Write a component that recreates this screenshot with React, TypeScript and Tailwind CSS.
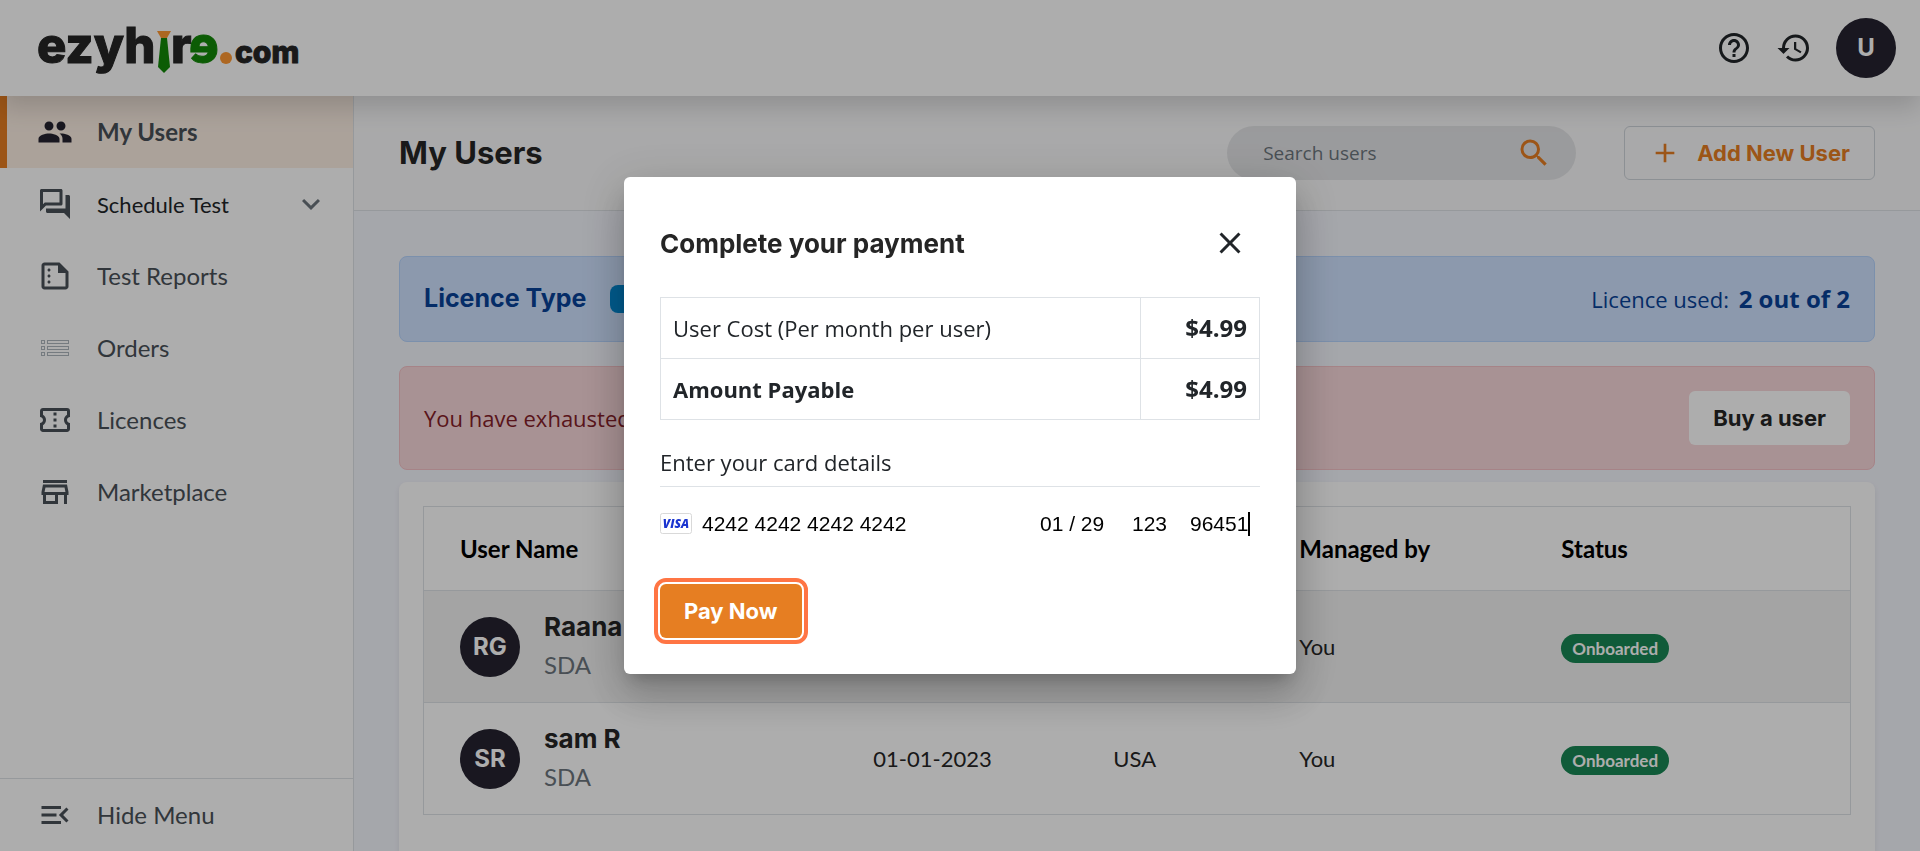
import type { ReactNode } from "react";
import type { IconType } from "react-icons";
import {
  MdAdd,
  MdClose,
  MdExpandMore,
  MdHelpOutline,
  MdHistory,
  MdMenuOpen,
  MdOutlineConfirmationNumber,
  MdOutlineForum,
  MdOutlineStore,
  MdOutlineSummarize,
  MdPeople,
  MdSearch,
} from "react-icons/md";

interface UserRow {
  initials: string;
  name: string;
  org: string;
  date: string;
  country: string;
  managedBy: string;
  status: string;
}

const users: UserRow[] = [
  {
    initials: "RG",
    name: "Raana G",
    org: "SDA",
    date: "01-01-2023",
    country: "USA",
    managedBy: "You",
    status: "Onboarded",
  },
  {
    initials: "SR",
    name: "sam R",
    org: "SDA",
    date: "01-01-2023",
    country: "USA",
    managedBy: "You",
    status: "Onboarded",
  },
];

function Logo() {
  return (
    <svg
      width="270"
      height="72"
      viewBox="0 0 270 72"
      role="img"
      aria-label="ezyhire.com"
      className="font-['Inter',sans-serif]"
    >
      <g fontSize="49" fontWeight="800" fill="#252525" stroke="#252525">
        <text x="1" y="51">ezyh</text>
        <text x="135" y="51">r</text>
      </g>
      <text x="153" y="51" fontSize="51" fontWeight="800" fill="#138808" stroke="#138808">
        ɘ
      </text>
      <path d="M121 19h14l-4 7h-6z" fill="#ff9933" />
      <path d="M125 26h6l3 29-6 6-6-6z" fill="#138808" />
      <circle cx="190" cy="46" r="6" fill="#ff9933" />
      <text x="199" y="51" fontSize="30" fontWeight="800" fill="#252525" stroke="#252525">
        com
      </text>
    </svg>
  );
}

function OrdersIcon() {
  return (
    <svg
      width="36"
      height="36"
      viewBox="0 0 36 36"
      fill="none"
      stroke="#adb5bd"
      aria-hidden="true"
    >
      {[10.5, 16.5, 22.5].map((y) => (
        <g key={y}>
          <rect x="4.5" y={y} width="3" height="3" />
          <rect x="10.5" y={y} width="21" height="3" />
        </g>
      ))}
    </svg>
  );
}

interface NavItemProps {
  icon: ReactNode;
  label: string;
  active?: boolean;
  expandable?: boolean;
}

function NavItem({ icon, label, active = false, expandable = false }: NavItemProps) {
  return (
    <a
      href="#"
      aria-current={active ? "page" : undefined}
      className={[
        "flex h-[72px] items-center gap-6 border-l-[7px] pl-[30px] pr-6",
        active
          ? "border-[#e67e22] bg-[#fcefe4] text-2xl font-bold text-[#495057]"
          : expandable
          ? "border-transparent text-[22px] text-[#212529]"
          : "border-transparent text-2xl text-[#495057]",
      ].join(" ")}
    >
      <span className={active ? "text-[#252330]" : "text-[#495057]"}>{icon}</span>
      <span className="flex-1">{label}</span>
      {expandable && <MdExpandMore size={36} className="text-[#6c757d]" />}
    </a>
  );
}

const navIcon = (Icon: IconType) => <Icon size={36} />;

function Sidebar() {
  return (
    <nav
      aria-label="Main"
      className="flex w-[354px] shrink-0 flex-col border-r border-[#dee2e6] bg-white"
    >
      <div className="flex-1">
        <NavItem icon={navIcon(MdPeople)} label="My Users" active />
        <NavItem icon={navIcon(MdOutlineForum)} label="Schedule Test" expandable />
        <NavItem icon={navIcon(MdOutlineSummarize)} label="Test Reports" />
        <NavItem icon={<OrdersIcon />} label="Orders" />
        <NavItem icon={navIcon(MdOutlineConfirmationNumber)} label="Licences" />
        <NavItem icon={navIcon(MdOutlineStore)} label="Marketplace" />
      </div>
      <div className="border-t border-[#dee2e6]">
        <NavItem icon={navIcon(MdMenuOpen)} label="Hide Menu" />
      </div>
    </nav>
  );
}

function TopBar() {
  return (
    <header className="relative z-10 flex h-24 shrink-0 items-center justify-between bg-white pl-9 pr-6 shadow-[0_12px_24px_rgba(0,0,0,0.15)]">
      <a href="#">
        <Logo />
      </a>
      <div className="flex items-center gap-6 text-[#212529]">
        <button aria-label="Help">
          <MdHelpOutline size={36} />
        </button>
        <button aria-label="History">
          <MdHistory size={36} />
        </button>
        <button
          aria-label="Account"
          className="h-[60px] w-[60px] rounded-full bg-[#252330] font-['Inter',sans-serif] text-2xl font-bold text-white"
        >
          U
        </button>
      </div>
    </header>
  );
}

function PageHeader() {
  return (
    <div className="flex h-[115px] items-center border-b border-[#dee2e6] bg-[#fafafb] px-[45px]">
      <h1 className="flex-1 font-['Inter',sans-serif] text-[31px] font-bold text-[#252525]">
        My Users
      </h1>
      <div className="flex h-[54px] w-[349px] items-center rounded-full bg-[#e4e5e7] pl-9 pr-6">
        <input
          type="search"
          aria-label="Search users"
          placeholder="Search users"
          className="w-full min-w-0 flex-1 bg-transparent font-['Open_Sans',sans-serif] text-[19px] text-[#6c757d] outline-none placeholder:text-[#6c757d]"
        />
        <MdSearch size={36} className="text-[#e67e22]" />
      </div>
      <button className="ml-12 flex h-[54px] items-center gap-4 rounded-md border border-[#ced4da] px-6 font-['Inter',sans-serif] text-[22px] font-bold text-[#e67e22]">
        <MdAdd size={32} />
        Add New User
      </button>
    </div>
  );
}

function UsersTable() {
  return (
    <table className="w-full table-fixed border border-[#dee2e6] text-left text-[22px] text-[#252525]">
      <colgroup>
        <col className="w-[29%]" />
        <col className="w-[240px]" />
        <col className="w-[186px]" />
        <col className="w-[262px]" />
        <col />
      </colgroup>
      <thead className="text-2xl text-black">
        <tr className="h-[84px] border-b border-[#dee2e6]">
          <th className="pl-9 font-bold">User Name</th>
          <th className="pl-9 font-bold">Date</th>
          <th className="pl-9 font-bold">Country</th>
          <th className="pl-9 font-bold">Managed by</th>
          <th className="pl-9 font-bold">Status</th>
        </tr>
      </thead>
      <tbody>
        {users.map((user) => (
          <tr
            key={user.initials}
            className="h-[112px] border-b border-[#dee2e6] odd:bg-[#f2f2f2]"
          >
            <td className="pl-9">
              <div className="flex items-center gap-6">
                <span className="flex h-[60px] w-[60px] items-center justify-center rounded-full bg-[#252330] font-['Inter',sans-serif] text-2xl font-bold text-white">
                  {user.initials}
                </span>
                <div>
                  <div className="font-['Inter',sans-serif] text-[26px] leading-9 font-bold">
                    {user.name}
                  </div>
                  <div className="text-2xl leading-10 text-[#6c757d]">{user.org}</div>
                </div>
              </div>
            </td>
            <td className="pl-9">{user.date}</td>
            <td className="pl-9">{user.country}</td>
            <td className="pl-9">{user.managedBy}</td>
            <td className="pt-1 pl-9">
              <span className="flex h-[29px] w-fit items-center rounded-full bg-[#198754] px-[11px] text-[17px] font-bold text-white">
                {user.status}
              </span>
            </td>
          </tr>
        ))}
      </tbody>
    </table>
  );
}

function Content() {
  return (
    <main className="flex min-w-0 flex-1 flex-col bg-[#f4f6fd]">
      <PageHeader />
      <div className="flex flex-1 flex-col px-[45px] pt-[45px] font-['Open_Sans',sans-serif] text-[22px]">
        <div className="flex h-[86px] items-center rounded-lg border border-[#b6d4fe] bg-[#cfe2ff] px-6 text-[#084298]">
          <h2 className="font-['Inter',sans-serif] text-[25px] font-bold">Licence Type</h2>
          <span className="ml-6 rounded-lg bg-[#0087d1] px-5 text-xl font-bold text-white">
            Free
          </span>
          <p className="ml-auto">
            Licence used: <strong className="ml-1 text-2xl">2 out of 2</strong>
          </p>
        </div>
        <div className="mt-6 flex h-[104px] items-center justify-between rounded-lg border border-[#f5c2c7] bg-[#f8d7da] px-6 text-[#842029]">
          <p>You have exhausted</p>
          <button className="h-[54px] rounded-md bg-white px-6 font-['Inter',sans-serif] text-[22px] font-bold text-[#252525]">
            Buy a user
          </button>
        </div>
        <section className="mt-3 flex-1 rounded-t-lg bg-white p-6 font-['Lato',sans-serif] shadow-[0_3px_6px_rgba(0,0,0,0.08)]">
          <UsersTable />
        </section>
      </div>
    </main>
  );
}

const cardInput = "bg-transparent font-['Liberation_Sans',sans-serif] text-[21px] text-black outline-none";

function PaymentDialog() {
  return (
    <div className="fixed inset-0 z-20 flex items-center justify-center bg-black/32">
      <div
        role="dialog"
        aria-modal="true"
        aria-labelledby="payment-title"
        className="w-[672px] max-w-full rounded-md bg-white p-9 font-['Open_Sans',sans-serif] text-[22px] text-[#212529] shadow-[0_11px_15px_-7px_rgba(0,0,0,0.2),0_24px_38px_3px_rgba(0,0,0,0.14),0_9px_46px_8px_rgba(0,0,0,0.12)]"
      >
        <div className="flex h-[60px] items-center justify-between pr-3">
          <h2
            id="payment-title"
            className="font-['Inter',sans-serif] text-[26px] font-bold text-[#252525]"
          >
            Complete your payment
          </h2>
          <button aria-label="Close">
            <MdClose size={36} />
          </button>
        </div>

        <table className="mt-6 w-full border-collapse">
          <tbody>
            <tr className="h-[61px]">
              <td className="border border-[#dee2e6] px-3">User Cost (Per month per user)</td>
              <td className="w-[119px] border border-[#dee2e6] px-3 text-right text-2xl font-bold">
                $4.99
              </td>
            </tr>
            <tr className="h-[61px]">
              <td className="border border-[#dee2e6] px-3 font-bold">Amount Payable</td>
              <td className="w-[119px] border border-[#dee2e6] px-3 text-right text-2xl font-bold">
                $4.99
              </td>
            </tr>
          </tbody>
        </table>

        <p className="mt-6 border-b border-[#dee2e6] pb-1.5 leading-9">Enter your card details</p>

        <form onSubmit={(e) => e.preventDefault()}>
          <div className="flex h-[73px] items-center pr-2.5">
            <svg width="32" height="22" viewBox="0 0 32 22" role="img" aria-label="Visa">
              <rect x="0.5" y="0.5" width="31" height="20" rx="2" fill="#fff" stroke="#d9d9d9" />
              <text
                x="16"
                y="15"
                textAnchor="middle"
                fontSize="12"
                fontWeight="800"
                fontStyle="italic"
                fill="#1a34d0"
              >
                VISA
              </text>
            </svg>
            <input
              aria-label="Card number"
              defaultValue="4242 4242 4242 4242"
              className={`${cardInput} ml-2.5 w-0 flex-1`}
            />
            <input aria-label="Expiry date" defaultValue="01 / 29" className={`${cardInput} w-[92px]`} />
            <input aria-label="CVC" defaultValue="123" className={`${cardInput} w-[58px]`} />
            <input aria-label="ZIP" defaultValue="96451" className={`${cardInput} w-[58px]`} />
            <span className="h-6 w-0.5 bg-black" />
          </div>
          <button
            type="submit"
            className="mt-6 h-[54px] rounded-md bg-[#e67e22] px-6 font-['Inter',sans-serif] text-[22px] font-bold text-white outline-4 outline-offset-2 outline-[#ff7544]"
          >
            Pay Now
          </button>
        </form>
      </div>
    </div>
  );
}

export default function App() {
  return (
    <div className="flex h-screen flex-col overflow-hidden font-['Lato',sans-serif]">
      <TopBar />
      <div className="flex min-h-0 flex-1">
        <Sidebar />
        <Content />
      </div>
      <PaymentDialog />
    </div>
  );
}
